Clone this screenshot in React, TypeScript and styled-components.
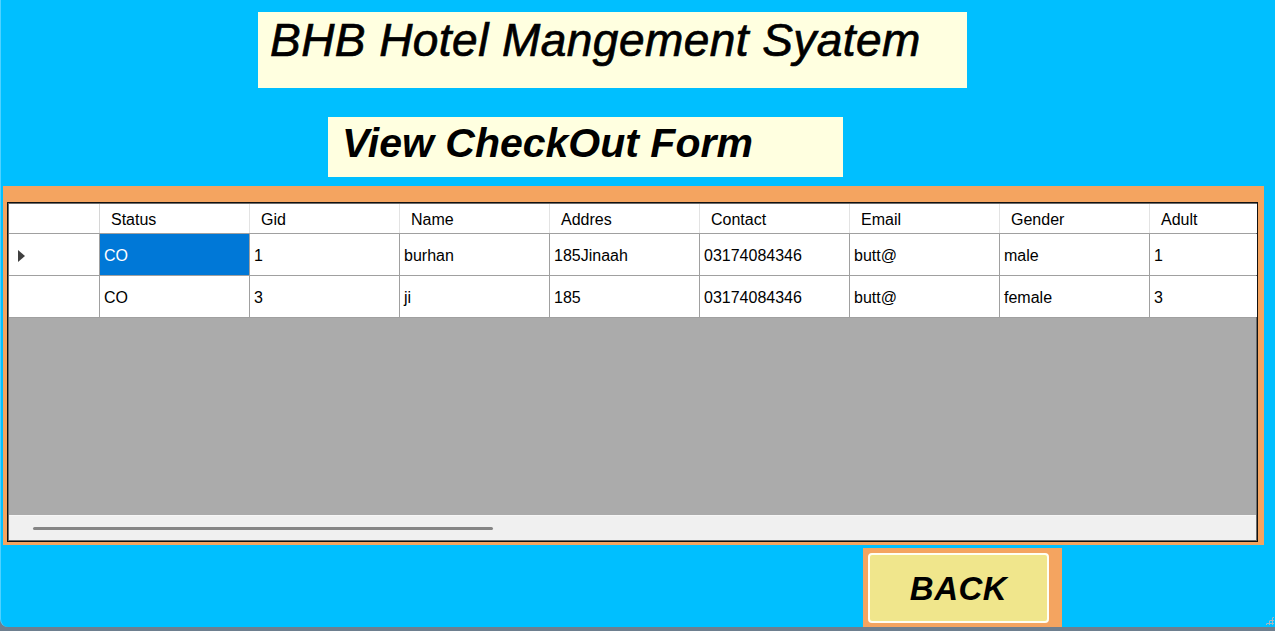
import React from "react";
import styled, { createGlobalStyle } from "styled-components";

const GlobalStyle = createGlobalStyle`
  html, body {
    margin: 0;
    padding: 0;
    background: #6e7f8f;
    overflow: hidden;
  }
  * { box-sizing: border-box; }
`;

const Screen = styled.div`
  width: 1275px;
  height: 631px;
  background: #6e7f8f;
`;

const Window = styled.div`
  position: relative;
  height: 627px;
  background: #00bfff;
  border-left: 1px solid #4fd2ff;
  border-bottom-left-radius: 8px;
  display: flex;
  flex-direction: column;
  align-items: flex-start;
  font-family: "Liberation Sans", Arial, sans-serif;
  color: #000;
`;

const Banner = styled.div<{ $left: number; $top: number; $w: number; $h: number; $size: number; $bold?: boolean; $padTop: number; $padLeft: number; $spacing?: number }>`
  margin: ${(p) => p.$top}px 0 0 ${(p) => p.$left}px;
  width: ${(p) => p.$w}px;
  height: ${(p) => p.$h}px;
  padding: ${(p) => p.$padTop}px 0 0 ${(p) => p.$padLeft}px;
  background: #ffffe0;
  font-size: ${(p) => p.$size}px;
  line-height: ${(p) => p.$size}px;
  letter-spacing: ${(p) => p.$spacing ?? 0}px;
  font-style: italic;
  font-weight: ${(p) => (p.$bold ? 700 : 400)};
  -webkit-text-stroke: ${(p) => (p.$bold ? 0 : 0.7)}px #000;
  white-space: nowrap;
`;

const Panel = styled.div`
  margin: 9px 0 0 2px;
  width: 1261px;
  height: 359px;
  padding: 16px 6px 3px 4px;
  background: #f4a460;
`;

const GridView = styled.div`
  width: 100%;
  height: 100%;
  border: 1px solid #111;
  box-shadow: inset 0 0 0 1px #6b6b6b;
  padding: 1px;
  display: flex;
  flex-direction: column;
  overflow: hidden;
  background: #ababab;
  font-size: 16px;
`;

const Row = styled.div<{ $header?: boolean }>`
  display: flex;
  flex: none;
  height: ${(p) => (p.$header ? 30 : 42)}px;
  background: #fff;
  border-bottom: 1px solid #a0a0a0;
`;

const Cell = styled.div<{ $w: number; $header?: boolean; $selected?: boolean }>`
  flex: none;
  width: ${(p) => p.$w}px;
  display: flex;
  align-items: center;
  padding: 2px 0 0 ${(p) => (p.$header ? 11 : 4)}px;
  border-right: 1px solid ${(p) => (p.$header ? "#e3e3e3" : "#a0a0a0")};
  background: ${(p) => (p.$selected ? "#0078d7" : "#fff")};
  color: ${(p) => (p.$selected ? "#fff" : "#000")};
  white-space: nowrap;
`;

const RowHeader = styled.div<{ $header?: boolean }>`
  flex: none;
  width: 91px;
  display: flex;
  align-items: center;
  padding-left: 9px;
  border-right: 1px solid ${(p) => (p.$header ? "#d6d6d6" : "#a0a0a0")};
  background: #fff;
`;

const Arrow = styled.span`
  width: 0;
  height: 0;
  border-top: 6px solid transparent;
  border-bottom: 6px solid transparent;
  border-left: 7px solid #404040;
  margin-top: 2px;
`;

const Empty = styled.div`
  flex: 1;
  background: #ababab;
`;

const ScrollBar = styled.div`
  flex: none;
  height: 25px;
  background: #f0f0f0;
  border-top: 1px solid #f6f6f6;
  display: flex;
  align-items: center;
  padding-left: 24px;
`;

const Thumb = styled.div`
  width: 460px;
  height: 3px;
  margin-top: 1px;
  border-radius: 2px;
  background: #858585;
`;

const Footer = styled.div`
  margin: 3px 0 0 862px;
  width: 199px;
  flex: 1;
  padding: 5px 0 0 5px;
  background: #f4a460;
`;

const BackButton = styled.button`
  width: 181px;
  height: 70px;
  border: 2px solid #fffff4;
  border-radius: 4px;
  background: #f0e68c;
  font-family: "Liberation Sans", Arial, sans-serif;
  font-size: 33px;
  line-height: 33px;
  letter-spacing: 0.5px;
  font-weight: 700;
  font-style: italic;
  color: #000;
  display: flex;
  align-items: center;
  justify-content: center;
  padding: 0;
  cursor: pointer;
`;

const Grip = styled.div`
  position: absolute;
  right: 1px;
  bottom: 2px;
  width: 9px;
  height: 9px;
  background-image: radial-gradient(circle, #a9b6c0 1px, transparent 1.2px);
  background-size: 3px 3px;
  clip-path: polygon(100% 0, 100% 100%, 0 100%);
`;

const columns = ["Status", "Gid", "Name", "Addres", "Contact", "Email", "Gender", "Adult"];

const rows = [
  ["CO", "1", "burhan", "185Jinaah", "03174084346", "butt@", "male", "1"],
  ["CO", "3", "ji", "185", "03174084346", "butt@", "female", "3"],
];

export default function App() {
  return (
    <>
      <GlobalStyle />
      <Screen>
        <Window>
          <Banner $left={257} $top={12} $w={709} $h={76} $size={46} $padTop={5} $padLeft={12} $spacing={0.45}>
            BHB Hotel Mangement Syatem
          </Banner>
          <Banner $left={327} $top={29} $w={515} $h={60} $size={41} $bold $padTop={6} $padLeft={14}>
            View CheckOut Form
          </Banner>
          <Panel>
            <GridView>
              <Row $header>
                <RowHeader $header />
                {columns.map((c) => (
                  <Cell key={c} $w={150} $header>
                    {c}
                  </Cell>
                ))}
              </Row>
              {rows.map((r, i) => (
                <Row key={i}>
                  <RowHeader>{i === 0 && <Arrow />}</RowHeader>
                  {r.map((v, j) => (
                    <Cell key={j} $w={150} $selected={i === 0 && j === 0}>
                      {v}
                    </Cell>
                  ))}
                </Row>
              ))}
              <Empty />
              <ScrollBar>
                <Thumb />
              </ScrollBar>
            </GridView>
          </Panel>
          <Footer>
            <BackButton>BACK</BackButton>
          </Footer>
          <Grip />
        </Window>
      </Screen>
    </>
  );
}
